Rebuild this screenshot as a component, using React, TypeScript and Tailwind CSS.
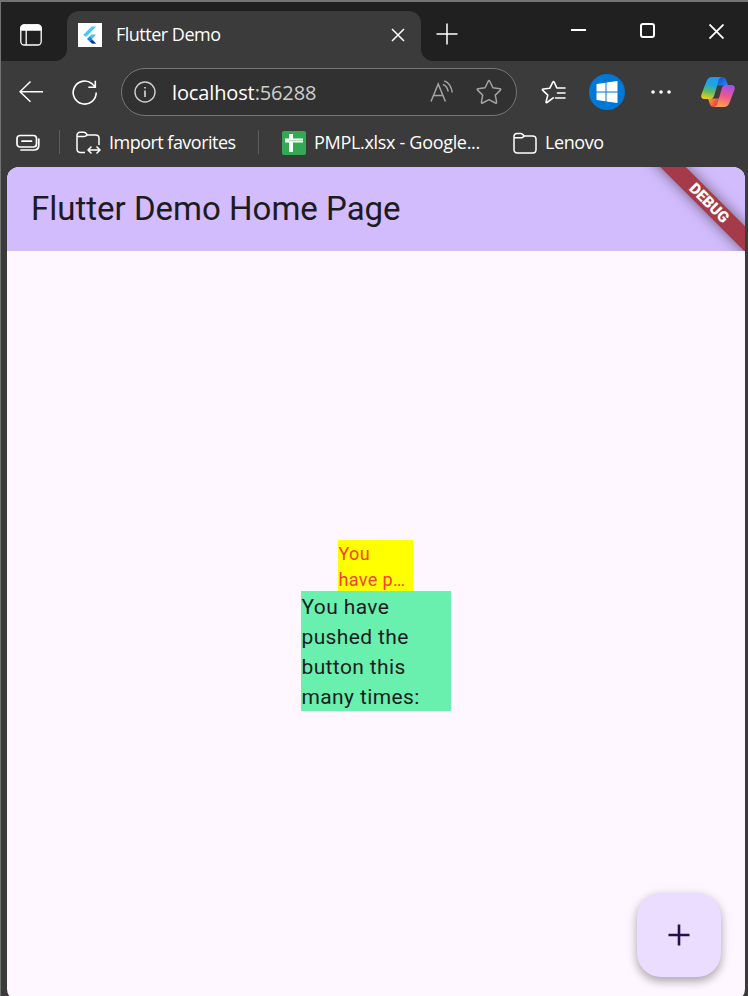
import React from "react";

const ui = "font-['Open_Sans','Noto_Sans',sans-serif]";

function FlutterIcon() {
  return (
    <svg className="block size-6 bg-white" viewBox="0 0 24 24">
      <path d="M13.800 3.500h4.400L8 14 5.300 11.700z" fill="#45c9fb" />
      <path d="M13.500 11.500h4.500l-5 5.500-3.800-1.200z" fill="#45bff8" />
      <path d="M9 16.100l3-2.400 6 6.800h-4.200z" fill="#1e88dc" />
      <path d="M11.800 18.200l2.800-.900 3.400 3.200h-3.700z" fill="#11398a" />
    </svg>
  );
}

function Folder() {
  return (
    <>
      <path d="M1 7V4.600C1 2.800 2.200 1.500 4 1.500h3.600c.8 0 1.500.4 2 .9L11.300 4h8.200C21.500 4 23 5.300 23 7.200V17.500c0 2-1.200 3.500-3.200 3.500H4.200C2.200 21 1 19.500 1 17.500z" />
      <path d="M1 5.800h6.800c1 0 1.600-.2 2.200-.7L11.300 4" />
    </>
  );
}

function TabStrip() {
  return (
    <div className="flex h-[59px]">
      <div className="w-[66px] rounded-br-[12px] bg-[#202020] pl-[19px] pt-[22px]">
        <svg className="block size-[22px]" viewBox="0 0 22 22" fill="none" stroke="#fff" strokeWidth="1.300">
          <rect x="0.800" y="0.800" width="20.400" height="20.200" rx="3.500" />
          <path d="M1 6V4.500A3.500 3.500 0 0 1 4.500 1h13A3.500 3.500 0 0 1 21 4.500V6z" fill="#fff" />
          <path d="M6.200 6v15" />
        </svg>
      </div>
      <div className="w-[354px] bg-[linear-gradient(#202020_50%,#3b3b3b_50%)] pt-[9px]">
        <div className="flex h-[50px] items-center rounded-t-[12px] bg-[#3b3b3b] pb-[2px] pl-[11px]">
          <FlutterIcon />
          <span className={`-mt-[2px] ml-[14px] w-[260px] text-[18px] leading-6 tracking-[-0.5px] text-white ${ui}`}>Flutter Demo</span>
          <svg className="ml-[15px] size-[14px]" viewBox="0 0 14 14" stroke="#fff" strokeWidth="1.500">
            <path d="M1 1l12 12M13 1L1 13" />
          </svg>
        </div>
      </div>
      <div className="flex h-[59px] flex-1 items-start rounded-bl-[12px] bg-[#202020]">
        <svg className="ml-[15px] mt-[21px] h-[22px] w-[22px]" viewBox="0 0 22 22" stroke="#fff" strokeWidth="1.500">
          <path d="M.5 11h21M11 .5v21" />
        </svg>
        <div className="ml-[113px] mt-[27px] h-[2px] w-[15px] bg-white" />
        <div className="ml-[54px] mt-[21px] size-[15px] rounded-[3px] border-2 border-white" />
        <svg className="ml-[54px] mt-[22px] size-[15px]" viewBox="0 0 15 15" stroke="#fff" strokeWidth="1.800">
          <path d="M.5 .5l14 14M14.500 .5l-14 14" />
        </svg>
      </div>
    </div>
  );
}

function Copilot() {
  return (
    <svg className="ml-[29px] h-[32px] w-[36px] shrink-0" viewBox="0 0 36 32">
      <defs>
        <linearGradient id="cpLeft" x1="0.5" y1="0" x2="0.3" y2="1">
          <stop offset="0" stopColor="#1b9af5" />
          <stop offset=".35" stopColor="#23a5dd" />
          <stop offset=".65" stopColor="#5fb969" />
          <stop offset="1" stopColor="#f4cb14" />
        </linearGradient>
        <linearGradient id="cpRight" x1="0.6" y1="0" x2="0.4" y2="1">
          <stop offset="0" stopColor="#a34df0" />
          <stop offset=".5" stopColor="#ee578d" />
          <stop offset="1" stopColor="#fda04d" />
        </linearGradient>
        <linearGradient id="cpTop" x1="0" y1="0" x2="1" y2="1">
          <stop offset="0" stopColor="#1447c0" />
          <stop offset="1" stopColor="#258ef5" />
        </linearGradient>
        <linearGradient id="cpBottom" x1="0" y1="0" x2="1" y2="0.5">
          <stop offset="0" stopColor="#fba43c" />
          <stop offset="1" stopColor="#e53a43" />
        </linearGradient>
      </defs>
      <path d="M17 1h5.500c2.300 0 3.200 1.300 3.900 3.500L28 9.500H17z" fill="url(#cpTop)" />
      <path d="M19 31h-5.500c-2.300 0-3.200-1.300-3.900-3.500L8 22.500h11z" fill="url(#cpBottom)" />
      <path d="M21.500 1H12.500C9 1 7.300 2.500 6.200 6L1.600 18c-1.200 3.500.2 5 3.400 5h5c2.500 0 3.600-1.500 4.400-4.100L18.500 5C19.200 2.500 20.200 1.300 21.500 1z" fill="url(#cpLeft)" />
      <path d="M14.500 31h9c3.500 0 5.200-1.500 6.300-5L34.400 14c1.200-3.500-.2-5-3.400-5h-5c-2.500 0-3.600 1.500-4.400 4.100L17.500 27c-.7 2.500-1.700 3.700-3 4z" fill="url(#cpRight)" />
    </svg>
  );
}

function Toolbar() {
  return (
    <div className="mt-[7px] flex h-12 items-center">
      <svg className="-mt-px ml-[18px] h-6 w-[25px]" viewBox="0 0 25 24" fill="none" stroke="#fff" strokeWidth="1.500">
        <path d="M11.500 1.500L1 11.700l10.500 10M1 11.700h23" />
      </svg>
      <svg className="ml-[27px] size-[27px]" viewBox="0 0 27 27" fill="none" stroke="#fff" strokeWidth="1.600">
        <path d="M25.200 13.500A11.500 11.500 0 1 1 20.800 4.500L24.300 8M24.300 1.800V8.300h-7" />
      </svg>
      <div className="ml-[23px] flex h-12 w-[396px] items-center rounded-full border-[1.500px] border-[#767676] bg-[#313131]">
        <svg className="ml-[12px] size-[22px]" viewBox="0 0 22 22" fill="none" stroke="#d0d0d0" strokeWidth="1.400">
          <circle cx="11" cy="11" r="10" />
          <path d="M11 9.500v6.500M11 6v1.600" strokeWidth="1.700" />
        </svg>
        <span className={`ml-[16px] mt-px w-[240px] text-[20px] leading-6 tracking-[-0.130px] text-white ${ui}`}>
          localhost<span className="text-[#cecece]">:56288</span>
        </span>
        <svg className="ml-[18px] size-6" viewBox="0 0 24 24" fill="none" stroke="#a3a3a3" strokeWidth="1.500">
          <path d="M1 21.500L8.200 4l7.200 17.500M3.500 15.500h9.500M14.200 1c4.500 1 7.500 6 8 11.500M12.800 4.500c3 .8 4.700 3.500 5.400 7" />
        </svg>
        <svg className="ml-[22px] size-[26px]" viewBox="0 0 26 26" fill="none" stroke="#a3a3a3" strokeWidth="1.500" strokeLinejoin="round">
          <path d="M12.200 2.300q.8-1.500 1.600 0l3.100 6.500 7 .9q1.500.3.5 1.400l-5.100 5 1.300 7q.1 1.500-1.200.9L13 20.700 6.600 24q-1.300.6-1.200-.9l1.300-7-5.100-5q-1-1.100.5-1.400l7-.9z" />
        </svg>
      </div>
      <svg className="ml-[24px] h-6 w-[25px]" viewBox="0 0 25 24" fill="none" stroke="#fff" strokeWidth="1.600" strokeLinecap="round" strokeLinejoin="round">
        <path d="M12.200 17.800L6 22.500q-1.300.5-.9-.9l1.700-6.400-5-4.800q-1-1.200.5-1.400l6.400-.7 3-6q.8-1.400 1.600 0L15.800 8H24M16.500 13h7.500M14.500 18h9.500" />
      </svg>
      <div className="ml-[23px] grid size-9 place-items-center rounded-full bg-[#0078d7]">
        <svg className="h-[22px] w-[22px]" viewBox="0 0 22 22" fill="#fff">
          <path d="M.5 3l9-1.300v8.800h-9zM10.500 1.500L21.500 0v10.500h-11zM.5 11.500h9v8.800l-9-1.300zM10.500 11.500h11V22l-11-1.600z" />
        </svg>
      </div>
      <svg className="ml-[26px] h-1 w-5" viewBox="0 0 20 4" fill="#fff">
        <circle cx="2" cy="2" r="1.800" />
        <circle cx="10" cy="2" r="1.800" />
        <circle cx="18" cy="2" r="1.800" />
      </svg>
      <Copilot />
    </div>
  );
}

function FavoritesBar() {
  const text = `-mt-[2px] text-[18px] leading-6 text-white whitespace-nowrap ${ui}`;
  return (
    <div className="flex h-[51px] items-center pt-[3px]">
      <svg className="ml-[15px] h-[18px] w-6" viewBox="0 0 24 18" fill="none" stroke="#fff" strokeWidth="1.700" strokeLinecap="round">
        <rect x="1" y="1.500" width="19.500" height="11.500" rx="3" />
        <path d="M6 7.200h9.500M22.800 5v6c0 3.500-1.600 5-5 5H5" />
      </svg>
      <div className="-mt-[2px] ml-[19px] h-6 w-px bg-[#5c5c5c]" />
      <svg className="-mt-px ml-[16px] h-[24px] w-[26px]" viewBox="0 0 26 24" fill="none" stroke="#fff" strokeWidth="1.500" strokeLinejoin="round">
        <path d="M9 21.500H4.200C2.200 21.500 1 20 1 18V4.500C1 2.700 2.200 1.200 4 1.200h3.700c.8 0 1.500.3 2 .8L11.300 4h8.200C21.500 4 23 5.300 23 7.200V14M1 5.500h6.800c1 0 1.600-.3 2.200-.700L11.300 4" />
        <path d="M15.500 15.500L12 19l3.500 3.500M20.500 15.500L24 19l-3.500 3.500M12 19h12" />
      </svg>
      <span className={`ml-[7px] w-[128px] tracking-[-0.520px] ${text}`}>Import favorites</span>
      <div className="-mt-[2px] ml-[21px] h-6 w-px bg-[#5c5c5c]" />
      <div className="ml-[23px] grid size-6 place-items-center rounded-[2px] bg-[#34a853]">
        <svg className="size-[18px]" viewBox="0 0 18 18" fill="#fff">
          <path d="M4 0h4v4.500h10v4H8V18H4V8.500H0v-4h4z" />
          <path d="M4 6.500h14" stroke="#34a853" strokeWidth=".4" />
        </svg>
      </div>
      <span className={`ml-[8px] w-[168px] tracking-[-0.310px] ${text}`}>PMPL.xlsx - Google...</span>
      <svg className="ml-[31px] h-[22px] w-6" viewBox="0 0 24 22" fill="none" stroke="#fff" strokeWidth="1.500">
        <Folder />
      </svg>
      <span className={`ml-[8px] tracking-[-0.400px] ${text}`}>Lenovo</span>
    </div>
  );
}

function DebugBanner() {
  return (
    <div className="pointer-events-none absolute right-0 top-0 h-[84px] w-[120px] overflow-hidden">
      <div className="absolute left-[-16px] top-[27px] flex h-[18px] w-[200px] rotate-45 items-center justify-center bg-[#a53b4a] font-['Roboto',sans-serif] text-[15.300px] font-black leading-[18px] text-white shadow-[0_0_14px_rgba(0,0,0,0.5)]">
        DEBUG
      </div>
    </div>
  );
}

export default function App() {
  return (
    <div className="h-[996px] w-[748px] overflow-hidden border-l border-t-2 border-[#737373] bg-[#3b3b3b]">
      <TabStrip />
      <Toolbar />
      <FavoritesBar />
      <main className="relative ml-[6px] flex h-[834px] w-[738px] flex-col overflow-hidden rounded-[12px] bg-[#fef7ff] font-['Roboto',sans-serif] text-[#1d1b20]">
        <header className="flex h-[84px] shrink-0 items-center bg-[#d2bcfd] pl-6 text-[33px] leading-[42px]">Flutter Demo Home Page</header>
        <div className="flex flex-1 flex-col items-center justify-center pb-px">
          <div className="mr-px h-[51px] w-[75px] bg-[#ffff00] pl-[0.5px] pt-px text-[18px] leading-[26px] tracking-[0.375px] text-[#f44336]">
            You<br />have p…
          </div>
          <div className="h-[120px] w-[150px] bg-[#69f0ae] pl-[0.5px] pt-px text-[21px] leading-[30px] tracking-[0.375px]">
            You have<br />pushed the<br />button this<br />many times:
          </div>
        </div>
        <button className="absolute left-[630px] top-[726px] grid size-[84px] place-items-center rounded-[24px] bg-[#eaddff] shadow-[0_5px_8px_rgba(0,0,0,0.22),0_2px_12px_rgba(0,0,0,0.14)]">
          <svg className="size-[22px]" viewBox="0 0 22 22" stroke="#25104d" strokeWidth="2.600">
            <path d="M.5 11h21M11 .5v21" />
          </svg>
        </button>
        <DebugBanner />
      </main>
    </div>
  );
}
